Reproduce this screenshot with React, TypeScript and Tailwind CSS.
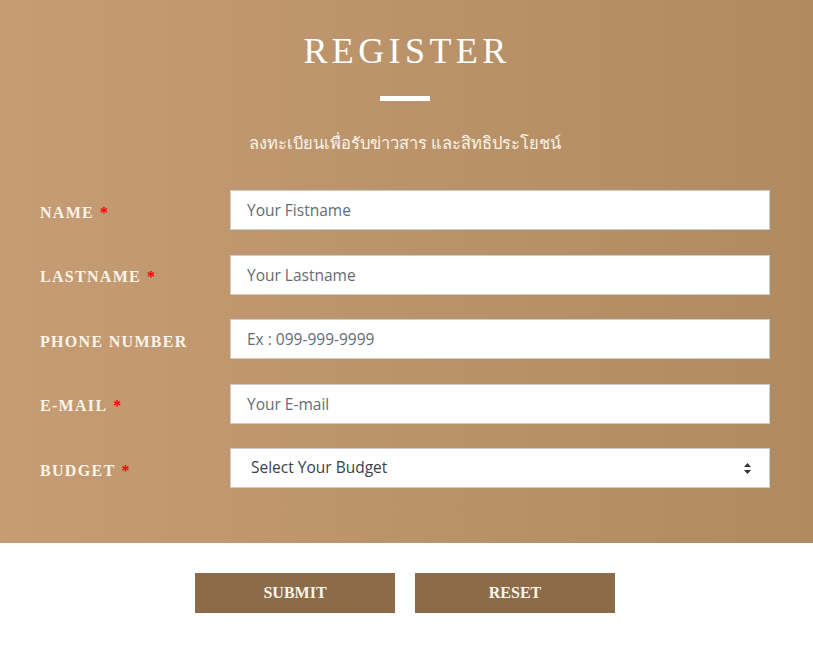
import React from "react";

const serif = { fontFamily: '"Liberation Serif", "DejaVu Serif", serif' };
const sans = { fontFamily: '"Open Sans", "Noto Sans", sans-serif' };

function Row({ label, req, children }: { label: string; req?: boolean; children: React.ReactNode }) {
  return (
    <div className="flex items-center h-[40px]">
      <div className="w-[190px] pt-[5px] text-[16px] font-bold tracking-[1.3px] text-[#fbf4e8]" style={serif}>
        {label}
        {req && <span className="text-[#ff0000] ml-[6px]">*</span>}
      </div>
      <div className="flex-1">{children}</div>
    </div>
  );
}

function Input({ ph }: { ph: string }) {
  return (
    <input
      placeholder={ph}
      className="w-full h-[40px] bg-white border border-[#c9cdd4] pl-[16px] text-[15.5px] text-[#555] placeholder:text-[#636c78] outline-none"
      style={sans}
    />
  );
}

export default function App() {
  return (
    <div className="w-[813px] h-[647px] bg-white">
      <div className="h-[543px] bg-gradient-to-r from-[#c69c74] to-[#b08a60] pt-[29px] pl-[40px] pr-[43px]">
        <h1 className="text-center text-[36px] leading-[44px] tracking-[4.4px] text-white pl-[4px]" style={serif}>
          REGISTER
        </h1>
        <div className="mx-auto mt-[23px] w-[50px] h-[5px] bg-white" />
        <p className="text-center text-[16.5px] text-[#fbf4e8] mt-[30px] leading-[24px]" style={sans}>
          ลงทะเบียนเพื่อรับข่าวสาร และสิทธิประโยชน์
        </p>
        <div className="mt-[35px] flex flex-col gap-[24.5px]">
          <Row label="NAME" req>
            <Input ph="Your Fistname" />
          </Row>
          <Row label="LASTNAME" req>
            <Input ph="Your Lastname" />
          </Row>
          <Row label="PHONE NUMBER">
            <Input ph="Ex : 099-999-9999" />
          </Row>
          <Row label="E-MAIL" req>
            <Input ph="Your E-mail" />
          </Row>
          <Row label="BUDGET" req>
            <div className="relative w-full h-[40px] bg-white border border-[#c9cdd4] flex items-center pl-[20px] text-[15.5px] text-[#3a3f4a]" style={sans}>
              Select Your Budget
              <svg className="absolute right-[17px] top-[13px]" width="9" height="13" viewBox="0 0 9 13">
                <path d="M4.5 1 L8 5 L1 5 Z" fill="#333" />
                <path d="M4.5 12 L8 8 L1 8 Z" fill="#333" />
              </svg>
            </div>
          </Row>
        </div>
      </div>
      <div className="flex justify-center gap-[20px] pt-[30px] pr-[3px]">
        <button className="w-[200px] h-[40px] bg-[#8b6b48] text-[#fbf4e8] font-bold text-[16px]" style={serif}>
          SUBMIT
        </button>
        <button className="w-[200px] h-[40px] bg-[#8b6b48] text-[#fbf4e8] font-bold text-[16px]" style={serif}>
          RESET
        </button>
      </div>
    </div>
  );
}
